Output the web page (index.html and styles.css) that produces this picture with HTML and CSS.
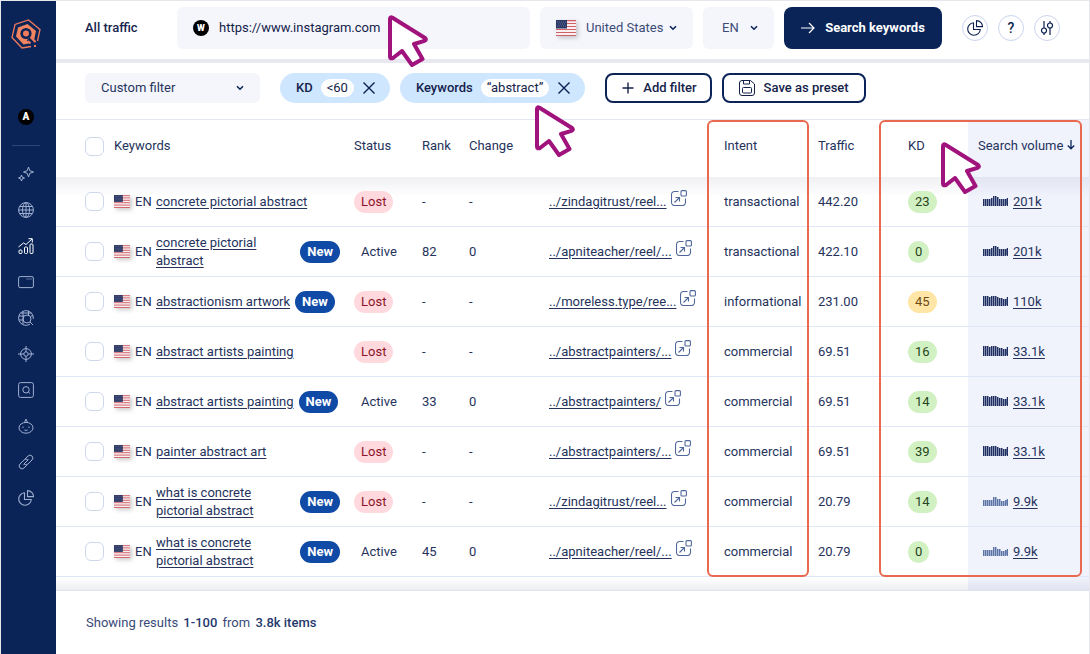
FILE: index.html
```
<!DOCTYPE html>
<html lang="en">
<head>
<meta charset="utf-8">
<title>All traffic</title>
<link rel="stylesheet" href="styles.css">
</head>
<body>
<svg class="sprite" aria-hidden="true">
  <symbol id="flag" viewBox="0 0 20 16">
    <rect width="20" height="16" fill="#f8f0f0"/>
    <path d="M0 .7h20M0 3.500h20M0 6.500h20M0 9.500h20M0 12.500h20M0 15.500h20" stroke="#d0606a" stroke-width="1.200"/>
    <rect width="11" height="8.500" fill="#2a3763"/>
    <path d="M1 2h9M2 4h8M1 6h9" stroke="#7783a8" stroke-width=".8" stroke-dasharray="1 1"/>
  </symbol>
  <symbol id="chevron" viewBox="0 0 8 6"><path d="M1 1.200l3 3 3-3" fill="none" stroke="#0a2458" stroke-width="1.600"/></symbol>
  <symbol id="close" viewBox="0 0 14 14"><path d="M1.500 1.500l11 11M12.500 1.500l-11 11" fill="none" stroke="#0a1f4d" stroke-width="1.400"/></symbol>
  <symbol id="link-out" viewBox="0 0 16 16">
    <g fill="none" stroke="#50679b" stroke-width="1.100"><path d="M7.500 1.500H3.500a3 3 0 0 0-3 3v8a3 3 0 0 0 3 3h8a3 3 0 0 0 3-3V8.500"/><rect x="10" y=".6" width="5.400" height="5.400" rx="1"/><path d="M3.500 12.500L8.500 7.500M4.500 7.500h4v4"/></g>
  </symbol>
  <symbol id="bars-a" viewBox="0 0 25 10"><path d="M.75 10V3M2.750 10V3M4.750 10V3M6.750 10V3M8.750 10V2M10.750 10V0M12.750 10V0M14.750 10V1M16.750 10V3M18.750 10V3M20.750 10V3M22.750 10V3M24.500 10V2" stroke="currentColor" stroke-width="1.500"/></symbol>
  <symbol id="bars-b" viewBox="0 0 25 10"><path d="M.75 10V0M2.750 10V0M4.750 10V0M6.750 10V1M8.750 10V0M10.750 10V0M12.750 10V0M14.750 10V1M16.750 10V2M18.750 10V2M20.750 10V3M22.750 10V3M24.500 10V1" stroke="currentColor" stroke-width="1.500"/></symbol>
  <symbol id="bars-c" viewBox="0 0 25 10"><path d="M.75 10V4M2.750 10V4M4.750 10V4M6.750 10V4M8.750 10V4M10.750 10V1M12.750 10V1M14.750 10V3M16.750 10V3M18.750 10V5M20.750 10V5M22.750 10V4M24.500 10V3" stroke="currentColor" stroke-width="1.500"/></symbol>
  <symbol id="pie" viewBox="0 0 16 16"><g fill="none" stroke="currentColor" stroke-width="1.100" stroke-linejoin="round"><path d="M6.500 2.700a6.300 6.300 0 1 0 6.800 6.800H6.500z"/><path d="M9.500.6v6h6a6 6 0 0 0-6-6z"/></g></symbol>
  <symbol id="pointer" viewBox="0 0 40 52"><path d="M2 4Q2 1.500 4.500 2.800L37 23Q39 25 36.500 25.800L26 29 34.500 44 24 50 14 36 5 43Q2 44 2 41.500Z" fill="#fff" stroke="#a0127c" stroke-width="4" stroke-linejoin="round"/></symbol>
</svg>

<div class="app">
  <nav class="sidebar" aria-label="Main">
    <svg class="logo" viewBox="0 0 30 30" fill="none">
      <path d="M20 27.500L11 29 1 18.500 4 5.500 17.500 1 29 10.500 26.500 22" stroke="#ee7a5c" stroke-width="1.300"/>
      <path d="M12.500 25.500L5 17.500 7 8.500 16.500 5l8.500 7-1.800 8.500-3.200 3.500z" fill="#f08560"/>
      <circle cx="15" cy="14.500" r="5.600" fill="#0a2458"/>
      <path d="M17.500 19.500l6 6" stroke="#0a2458" stroke-width="5"/>
      <circle cx="15" cy="14.500" r="3" fill="#ee7a5c"/>
      <path d="M19.500 18l5 5" stroke="#ee7a5c" stroke-width="2.200"/>
      <path d="M17 22l2.500 2.500M23 27h2" stroke="#ee7a5c" stroke-width="1.800"/>
    </svg>
    <span class="avatar">A</span>
    <ul class="menu">
      <li><a href="#" aria-label="Assistant"><svg viewBox="0 0 16 16"><path d="M10.500 1l1.300 3.700L15.500 6l-3.700 1.300-1.300 3.700-1.300-3.700L5.500 6l3.700-1.300zM3.500 9l.8 2.200 2.200.8-2.200.8-.8 2.200-.8-2.200L.5 12l2.200-.8z"/></svg></a></li>
      <li><a href="#" aria-label="Domain"><svg viewBox="0 0 16 16"><circle cx="8" cy="8" r="7.400"/><ellipse cx="8" cy="8" rx="3.500" ry="7.400"/><path d="M8 .6v14.800M.6 8h14.800M2 4.500h12M2 11.500h12"/></svg></a></li>
      <li><a href="#" class="active" aria-label="Traffic"><svg viewBox="0 0 16 16"><rect x="1" y="12" width="3" height="3.500" rx="1"/><rect x="6.500" y="9" width="3" height="6.500" rx="1"/><rect x="12" y="6" width="3" height="9.500" rx="1"/><path d="M.5 9l5-4 2.500 1.500L14 1M10.500.7h3.800v3.800"/></svg></a></li>
      <li><a href="#" aria-label="Pages"><svg viewBox="0 0 16 16"><rect x=".6" y="2.600" width="14.800" height="11" rx="1.500"/><path d="M8.500 5h1M10.500 5h1M12.500 5h1"/></svg></a></li>
      <li><a href="#" aria-label="Research"><svg viewBox="0 0 16 16"><path d="M12 14.200A7.400 7.400 0 1 1 15.300 9"/><circle cx="9" cy="9" r="4"/><path d="M12 12l3 3M1 6h5M1 10h4M5 1.500v13M2.500 3h11M10.500 1v4M13 6h2"/></svg></a></li>
      <li><a href="#" aria-label="Targets"><svg viewBox="0 0 16 16"><circle cx="8" cy="8" r="5.400"/><circle cx="8" cy="8" r="2.200"/><path d="M8 0v5.800M8 10.200V16M0 8h5.800M10.200 8H16"/></svg></a></li>
      <li><a href="#" aria-label="Search"><svg viewBox="0 0 16 16"><rect x=".6" y=".6" width="14.800" height="14.800" rx="2"/><circle cx="8" cy="7.800" r="3.200"/><path d="M10.300 10l1.700 1.700"/></svg></a></li>
      <li><a href="#" aria-label="Robot"><svg viewBox="0 0 16 16"><ellipse cx="8" cy="9.800" rx="7" ry="5.400"/><path d="M6.500 4.500L8 1l1.500 3.500M5 8.500v1.500M11 8.500v1.500M6.500 12q1.500 1 3 0"/></svg></a></li>
      <li><a href="#" aria-label="Links"><svg viewBox="0 0 16 16"><path d="M7 5l3-3a2.800 2.800 0 0 1 4 4l-4 4a2.800 2.800 0 0 1-4 0M9 11l-3 3a2.800 2.800 0 0 1-4-4l4-4a2.800 2.800 0 0 1 4 0M5.500 10.500l5-5"/></svg></a></li>
      <li><a href="#" aria-label="Reports"><svg><use href="#pie"/></svg></a></li>
    </ul>
  </nav>

  <main class="main">
    <header class="topbar">
      <h1 class="title">All traffic</h1>
      <label class="url-box"><span class="site-badge">W</span><input class="url-input" type="text" aria-label="Site address" value="https://www.instagram.com"></label>
      <div class="picker country">
        <svg class="flag flag-large"><use href="#flag"/></svg>
        <select aria-label="Country"><option>United States</option></select>
        <svg class="chevron"><use href="#chevron"/></svg>
      </div>
      <div class="picker language">
        <select aria-label="Language"><option>EN</option></select>
        <svg class="chevron"><use href="#chevron"/></svg>
      </div>
      <button class="search-button"><svg viewBox="0 0 14 12"><path d="M0 6h13M8 1l5 5-5 5" fill="none" stroke="#fff" stroke-width="1.200"/></svg>Search keywords</button>
      <div class="round-buttons">
        <button class="round" aria-label="Limits"><svg><use href="#pie"/></svg></button>
        <button class="round">?</button>
        <button class="round" aria-label="Settings"><svg viewBox="0 0 16 16"><g fill="none" stroke="currentColor" stroke-width="1.200"><path d="M5 1v7M5 13v2M11 1v2M11 8v7"/><circle cx="5" cy="10.500" r="2.500"/><circle cx="11" cy="5.500" r="2.500"/></g></svg></button>
      </div>
    </header>

    <section class="filters" aria-label="Filters">
      <div class="picker custom">
        <select aria-label="Custom filter"><option>Custom filter</option></select>
        <svg class="chevron"><use href="#chevron"/></svg>
      </div>
      <div class="chips">
        <div class="chip">KD<span class="chip-value">&lt;60</span><button class="chip-close" aria-label="Remove KD"><svg><use href="#close"/></svg></button></div>
        <div class="chip">Keywords<span class="chip-value">“abstract”</span><button class="chip-close" aria-label="Remove keywords"><svg><use href="#close"/></svg></button></div>
      </div>
      <div class="actions">
        <button class="outline"><svg viewBox="0 0 16 16"><path d="M8 2.500v11M2.500 8h11" fill="none" stroke="currentColor" stroke-width="1.400"/></svg>Add filter</button>
        <button class="outline save"><svg viewBox="0 0 16 16"><g fill="none" stroke="currentColor"><path d="M3 .5h8.500l4 3.500v9a2.500 2.500 0 0 1-2.500 2.500H3A2.500 2.500 0 0 1 .5 13V3A2.500 2.500 0 0 1 3 .5z"/><path d="M4.500.5v3.500h6V.5"/><rect x="3.500" y="7.500" width="9" height="5.500" rx="1"/></g></svg>Save as preset</button>
      </div>
    </section>

    <div class="results">
      <table class="grid">
        <colgroup><col class="c-key"><col class="c-status"><col class="c-rank"><col class="c-change"><col><col class="c-intent"><col class="c-traffic"><col class="c-kd"><col class="c-volume"></colgroup>
        <thead>
          <tr><th><div class="key"><input type="checkbox" aria-label="Select all">Keywords</div></th><th>Status</th><th>Rank</th><th>Change</th><td></td><th>Intent</th><th>Traffic</th><th>KD</th><th class="volume-head">Search volume <svg class="sort" viewBox="0 0 8 10"><path d="M4 0v9M.8 5.500L4 8.800l3.200-3.300" fill="none" stroke="#0a2458" stroke-width="1.300"/></svg></th></tr>
        </thead>
        <tbody>
          <tr><td><div class="key"><input type="checkbox" aria-label="Select row 1"><svg class="flag"><use href="#flag"/></svg><span class="lang">EN</span><a href="#">concrete pictorial abstract</a></div></td><td><span class="pill lost">Lost</span></td><td>-</td><td>-</td><td><a href="#">../zindagitrust/reel...</a><svg class="out"><use href="#link-out"/></svg></td><td>transactional</td><td>442.20</td><td><span class="pill easy">23</span></td><td class="volume"><svg class="bars"><use href="#bars-a"/></svg><a href="#">201k</a></td></tr>
          <tr><td><div class="key"><input type="checkbox" aria-label="Select row 2"><svg class="flag"><use href="#flag"/></svg><span class="lang">EN</span><a href="#">concrete pictorial abstract</a><span class="new">New</span></div></td><td><span class="pill">Active</span></td><td>82</td><td>0</td><td><a href="#">../apniteacher/reel/...</a><svg class="out"><use href="#link-out"/></svg></td><td>transactional</td><td>422.10</td><td><span class="pill easy">0</span></td><td class="volume"><svg class="bars"><use href="#bars-a"/></svg><a href="#">201k</a></td></tr>
          <tr><td><div class="key"><input type="checkbox" aria-label="Select row 3"><svg class="flag"><use href="#flag"/></svg><span class="lang">EN</span><a href="#">abstractionism artwork</a><span class="new">New</span></div></td><td><span class="pill lost">Lost</span></td><td>-</td><td>-</td><td><a href="#">../moreless.type/ree...</a><svg class="out"><use href="#link-out"/></svg></td><td>informational</td><td>231.00</td><td><span class="pill medium">45</span></td><td class="volume"><svg class="bars"><use href="#bars-b"/></svg><a href="#">110k</a></td></tr>
          <tr><td><div class="key"><input type="checkbox" aria-label="Select row 4"><svg class="flag"><use href="#flag"/></svg><span class="lang">EN</span><a href="#">abstract artists painting</a></div></td><td><span class="pill lost">Lost</span></td><td>-</td><td>-</td><td><a href="#">../abstractpainters/...</a><svg class="out"><use href="#link-out"/></svg></td><td>commercial</td><td>69.51</td><td><span class="pill easy">16</span></td><td class="volume"><svg class="bars"><use href="#bars-b"/></svg><a href="#">33.1k</a></td></tr>
          <tr><td><div class="key"><input type="checkbox" aria-label="Select row 5"><svg class="flag"><use href="#flag"/></svg><span class="lang">EN</span><a href="#">abstract artists painting</a><span class="new">New</span></div></td><td><span class="pill">Active</span></td><td>33</td><td>0</td><td><a href="#">../abstractpainters/</a><svg class="out"><use href="#link-out"/></svg></td><td>commercial</td><td>69.51</td><td><span class="pill easy">14</span></td><td class="volume"><svg class="bars"><use href="#bars-b"/></svg><a href="#">33.1k</a></td></tr>
          <tr><td><div class="key"><input type="checkbox" aria-label="Select row 6"><svg class="flag"><use href="#flag"/></svg><span class="lang">EN</span><a href="#">painter abstract art</a></div></td><td><span class="pill lost">Lost</span></td><td>-</td><td>-</td><td><a href="#">../abstractpainters/...</a><svg class="out"><use href="#link-out"/></svg></td><td>commercial</td><td>69.51</td><td><span class="pill easy">39</span></td><td class="volume"><svg class="bars"><use href="#bars-b"/></svg><a href="#">33.1k</a></td></tr>
          <tr><td><div class="key"><input type="checkbox" aria-label="Select row 7"><svg class="flag"><use href="#flag"/></svg><span class="lang">EN</span><a href="#">what is concrete pictorial abstract</a><span class="new">New</span></div></td><td><span class="pill lost">Lost</span></td><td>-</td><td>-</td><td><a href="#">../zindagitrust/reel...</a><svg class="out"><use href="#link-out"/></svg></td><td>commercial</td><td>20.79</td><td><span class="pill easy">14</span></td><td class="volume low"><svg class="bars"><use href="#bars-c"/></svg><a href="#">9.9k</a></td></tr>
          <tr><td><div class="key"><input type="checkbox" aria-label="Select row 8"><svg class="flag"><use href="#flag"/></svg><span class="lang">EN</span><a href="#">what is concrete pictorial abstract</a><span class="new">New</span></div></td><td><span class="pill">Active</span></td><td>45</td><td>0</td><td><a href="#">../apniteacher/reel/...</a><svg class="out"><use href="#link-out"/></svg></td><td>commercial</td><td>20.79</td><td><span class="pill easy">0</span></td><td class="volume low"><svg class="bars"><use href="#bars-c"/></svg><a href="#">9.9k</a></td></tr>
        </tbody>
      </table>
      <div class="frame frame-intent"></div>
      <div class="frame frame-volume"></div>
    </div>
    <div class="fade"></div>
    <footer class="summary">Showing results <b>1-100</b> from <b>3.8k items</b></footer>
  </main>
  <svg class="pointer pointer-url"><use href="#pointer"/></svg>
  <svg class="pointer pointer-chip"><use href="#pointer"/></svg>
  <svg class="pointer pointer-kd"><use href="#pointer"/></svg>
</div>
</body>
</html>
```
FILE: styles.css
```
* { box-sizing: border-box; }
body { margin: 0; background: #fff; color: #25335c; font: 13px/18px Roboto, sans-serif; }
svg { display: block; flex: none; }
a { color: inherit; text-underline-offset: 2px; }
button, select, input { font: inherit; color: inherit; }
button { cursor: pointer; }
.sprite { position: absolute; width: 0; height: 0; }

.app { position: relative; display: flex; min-height: 100vh; border: 1px solid #e6e7ea; }
.sidebar { display: flex; flex-direction: column; align-items: center; width: 55px; flex: none; padding: 18px 5px 0 0; background: #0a2458; }
.logo { width: 30px; height: 30px; }
.avatar { width: 16px; height: 16px; margin-top: 60px; border-radius: 50%; background: #000; color: #fff; font-size: 10px; font-weight: 900; line-height: 16px; text-align: center; }
.menu { display: grid; gap: 20px; width: 28px; margin: 20px 0 0; padding: 20px 6px 0; border-top: 1px solid #2f4675; list-style: none; }
.menu a { display: block; color: #a0afd0; }
.menu .active { color: #fff; }
.menu svg { width: 16px; height: 16px; fill: none; stroke: currentColor; stroke-width: 1; }

.main { flex: 1; min-width: 0; display: flex; flex-direction: column; }
.topbar { display: flex; align-items: center; gap: 10px; padding: 6px 29px 10px; border-bottom: 4px solid #e8e9f0; }
.title { width: 82px; margin: 0; font-size: 13px; font-weight: 500; line-height: 18px; color: #17264f; }
.url-box { display: flex; align-items: center; gap: 10px; flex: 1; height: 42px; padding: 0 16px; border-radius: 6px; background: #f5f6fc; color: #14224a; }
.site-badge { width: 16px; height: 16px; border-radius: 50%; background: #000; color: #fff; font-size: 9px; font-weight: 900; line-height: 16px; text-align: center; }
.url-input { flex: 1; min-width: 0; padding: 0; border: 0; outline: 0; background: none; }
.picker { display: grid; align-items: center; height: 42px; border-radius: 6px; background: #f5f6fc; color: #3c4b78; }
.picker > * { grid-area: 1 / 1; }
.picker select { width: 100%; height: 100%; padding: 0 16px; border: 0; background: none; appearance: none; }
.picker .chevron { width: 8px; height: 6px; justify-self: end; margin-right: 16px; pointer-events: none; }
.country { width: 153px; }
.country .flag { margin-left: 16px; }
.country select { padding-left: 46px; }
.language { width: 71px; }
.language select { padding-left: 19px; }
.custom { width: 175px; height: 30px; color: #25335c; }
.flag { width: 16px; height: 13px; filter: drop-shadow(2px 2px 2px #0003); }
.flag-large { width: 20px; height: 16px; }
.search-button { display: flex; align-items: center; justify-content: center; gap: 10px; width: 158px; height: 42px; padding: 0; border: 0; border-radius: 8px; background: #0a2458; color: #fff; font-weight: 700; }
.search-button svg { width: 14px; height: 12px; }
.round-buttons { display: flex; gap: 10px; margin-left: 10px; }
.round { display: grid; place-items: center; width: 26px; height: 26px; padding: 0; border: 1px solid #ccd4ef; border-radius: 50%; background: #fff; color: #0a1f4d; font-size: 14px; font-weight: 500; }
.round svg { width: 16px; height: 16px; }

.filters { display: flex; align-items: center; gap: 20px; padding: 10px 29px 16px; border-bottom: 1px solid #e4e8f4; color: #14224a; }
.chips, .actions { display: flex; gap: 10px; }
.chip { display: flex; align-items: center; gap: 8px; height: 30px; padding: 0 14px 0 16px; border-radius: 15px; background: #cfe6ff; font-weight: 500; }
.chip-value { padding: 0 6px; border-radius: 9px; background: #fff; font-weight: 400; }
.chip-close { padding: 0; border: 0; background: none; }
.chip-close svg { width: 14px; height: 14px; }
.outline { display: flex; align-items: center; gap: 7px; height: 30px; padding: 0 13px; border: 2px solid #0a2458; border-radius: 8px; background: #fff; font-weight: 500; }
.save { gap: 9px; padding: 0 15px; }
.outline svg { width: 16px; height: 16px; }

.results { position: relative; }
.grid { width: 100%; table-layout: fixed; border-collapse: separate; border-spacing: 0; }
.c-key { width: 298px; }
.c-status { width: 68px; }
.c-rank { width: 47px; }
.c-change { width: 80px; }
.c-intent { width: 94px; }
.c-traffic { width: 90px; }
.c-kd { width: 60px; }
.c-volume { width: 121px; }
.grid th, .grid td { padding: 0; font-weight: 400; text-align: left; white-space: nowrap; }
.grid thead tr { height: 57px; }
.grid thead th { padding-bottom: 5px; }
.grid tbody td { height: 50px; border-bottom: 1px solid #dfe6f7; }
.grid tbody tr:first-child td { background-image: linear-gradient(#14195010, transparent 20px); }
.grid .volume-head { padding-left: 10px; background: #f0f2fc; }
.grid .volume { padding-left: 15px; background-color: #f0f2fc; }
.key { display: flex; align-items: center; gap: 5px; padding: 0 14px 0 29px; white-space: normal; }
.key input { flex: none; width: 19px; height: 19px; margin: 0 5px 0 0; border: 1px solid #cfd8ea; border-radius: 6px; background: #fff; appearance: none; }
.lang { width: 16px; }
.new { flex: none; padding: 2px 7px; border-radius: 11px; background: #0f4aa6; color: #fff; font-weight: 700; }
.pill { display: inline-block; padding: 2px 7px; border-radius: 11px; }
.lost { background: #ffd9de; color: #8c1226; }
.easy { background: #d2f1c2; color: #25431c; }
.medium { background: #ffe6a6; color: #6b4a14; }
.out { display: inline-block; width: 16px; height: 16px; margin: -4px 0 0 4px; vertical-align: baseline; }
.bars { display: inline-block; width: 25px; height: 10px; margin-right: 5px; color: #1f2f62; }
.low .bars { color: #5c73a6; }
.sort { display: inline-block; width: 8px; height: 10px; }
.frame { position: absolute; top: 0; bottom: 0; border: 2px solid #e8694f; border-radius: 6px; pointer-events: none; }
.frame-intent { right: 280px; width: 102px; }
.frame-volume { right: 7px; width: 203px; }
.fade { height: 14px; background: linear-gradient(transparent, #14195012), linear-gradient(#f0f2fc, #f0f2fc) right / 121px 100% no-repeat; border-bottom: 1px solid #dde1f0; }
.summary { padding: 23px 30px; color: #3a4a78; }
.summary b { margin: 0 2px; font-weight: 500; color: #25386c; }

.pointer { position: absolute; width: 40px; height: 52px; pointer-events: none; }
.pointer-url { left: 387px; top: 14px; }
.pointer-chip { left: 534px; top: 104px; }
.pointer-kd { right: 108px; top: 141px; }
```
